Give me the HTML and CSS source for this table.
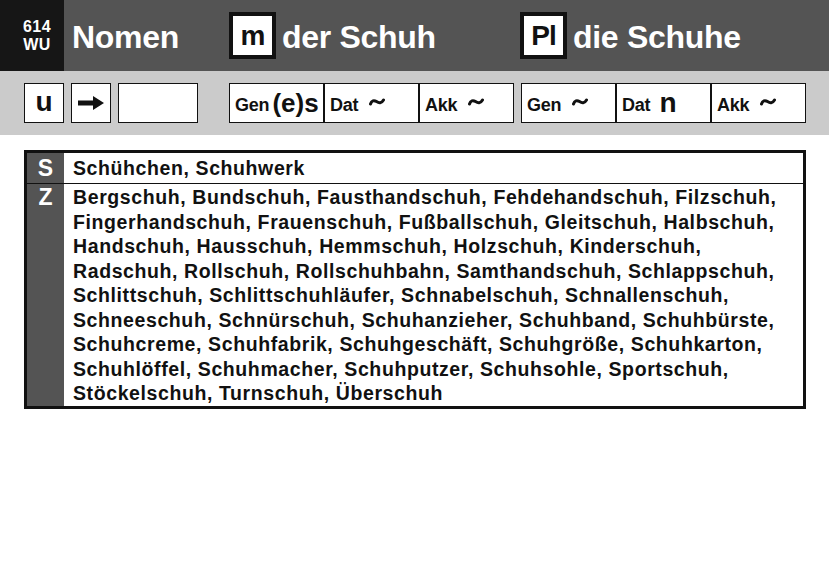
FILE: index.html
```html
<!DOCTYPE html>
<html lang="de">
<head>
<meta charset="utf-8">
<title>Nomen – der Schuh</title>
<link rel="stylesheet" href="styles.css">
</head>
<body>
<div class="page">
  <header class="header">
    <div class="num"><span>614</span><span>WU</span></div>
    <div class="grp grp-1"><span class="title">Nomen</span></div>
    <div class="grp grp-2"><span class="gbox">m</span><span class="title">der Schuh</span></div>
    <div class="grp grp-3"><span class="gbox">Pl</span><span class="title">die Schuhe</span></div>
  </header>
  <section class="band">
    <div class="grp grp-1 band-1">
      <div class="sq"><span class="u">u</span></div>
      <div class="sq"><svg width="26" height="14" viewBox="0 0 26 14"><path d="M0 4.5h15V0l11 7-11 7V9.5H0z" fill="#111"/></svg></div>
      <div class="sq wide"></div>
    </div>
    <div class="grp grp-2 cases">
      <div class="case"><span class="lbl">Gen</span><span class="big">(e)s</span></div>
      <div class="case"><span class="lbl">Dat</span><svg class="tilde" width="16" height="8" viewBox="0 0 16 8"><path d="M1.5 6C2.5 2.5 5 2 7.5 3.6S12.5 5.5 14.5 2" fill="none" stroke="#111" stroke-width="3" stroke-linecap="round"/></svg></div>
      <div class="case"><span class="lbl">Akk</span><svg class="tilde" width="16" height="8" viewBox="0 0 16 8"><path d="M1.5 6C2.5 2.5 5 2 7.5 3.6S12.5 5.5 14.5 2" fill="none" stroke="#111" stroke-width="3" stroke-linecap="round"/></svg></div>
    </div>
    <div class="grp grp-3 cases">
      <div class="case"><span class="lbl">Gen</span><svg class="tilde" width="16" height="8" viewBox="0 0 16 8"><path d="M1.5 6C2.5 2.5 5 2 7.5 3.6S12.5 5.5 14.5 2" fill="none" stroke="#111" stroke-width="3" stroke-linecap="round"/></svg></div>
      <div class="case"><span class="lbl">Dat</span><span class="big bign">n</span></div>
      <div class="case"><span class="lbl">Akk</span><svg class="tilde" width="16" height="8" viewBox="0 0 16 8"><path d="M1.5 6C2.5 2.5 5 2 7.5 3.6S12.5 5.5 14.5 2" fill="none" stroke="#111" stroke-width="3" stroke-linecap="round"/></svg></div>
    </div>
  </section>
  <section class="words">
    <div class="row row-s">
      <div class="key">S</div>
      <div class="val">Schühchen, Schuhwerk</div>
    </div>
    <div class="row row-z">
      <div class="key">Z</div>
      <div class="val">Bergschuh, Bundschuh, Fausthandschuh, Fehdehandschuh, Filzschuh,<br>Fingerhandschuh, Frauenschuh, Fußballschuh, Gleitschuh, Halbschuh,<br>Handschuh, Hausschuh, Hemmschuh, Holzschuh, Kinderschuh,<br>Radschuh, Rollschuh, Rollschuhbahn, Samthandschuh, Schlappschuh,<br>Schlittschuh, Schlittschuhläufer, Schnabelschuh, Schnallenschuh,<br>Schneeschuh, Schnürschuh, Schuhanzieher, Schuhband, Schuhbürste,<br>Schuhcreme, Schuhfabrik, Schuhgeschäft, Schuhgröße, Schuhkarton,<br>Schuhlöffel, Schuhmacher, Schuhputzer, Schuhsohle, Sportschuh,<br>Stöckelschuh, Turnschuh, Überschuh</div>
    </div>
  </section>
</div>
</body>
</html>
```

FILE: styles.css
```css
html, body {
  margin: 0;
  padding: 0;
  background: #fff;
}
body {
  font-family: "Liberation Sans", Arial, sans-serif;
  color: #111;
}
.page {
  width: 829px;
}
.header {
  display: flex;
  align-items: center;
  height: 71px;
  background: #545454;
}
.num {
  width: 64px;
  height: 71px;
  background: #161616;
  color: #fff;
  font-weight: 700;
  font-size: 16px;
  line-height: 18.5px;
  display: flex;
  flex-direction: column;
  align-items: center;
  justify-content: center;
  text-align: center;
  letter-spacing: 0.5px;
  box-sizing: border-box;
  padding: 1px 0 0 10px;
}
.grp {
  display: flex;
  align-items: center;
  box-sizing: border-box;
}
.header .grp-1 {
  width: 165px;
  padding-left: 8px;
}
.header .grp-2 {
  width: 291px;
}
.header .grp-3 {
  width: 309px;
}
.title {
  color: #fff;
  font-weight: 700;
  font-size: 32px;
  letter-spacing: -0.3px;
  line-height: 1;
  padding-top: 2px;
}
.gbox {
  width: 47px;
  height: 47px;
  box-sizing: border-box;
  border: 4px solid #111;
  background: #fff;
  color: #111;
  font-weight: 700;
  font-size: 28px;
  letter-spacing: -1px;
  display: flex;
  align-items: center;
  justify-content: center;
  margin-right: 6px;
}
.band {
  display: flex;
  height: 64px;
  background: #cbcbcb;
  padding: 12px 0 0 24px;
  box-sizing: border-box;
  align-items: flex-start;
}
.band-1 {
  width: 205px;
  gap: 7px;
  align-items: flex-start;
}
.sq {
  width: 40px;
  height: 40px;
  box-sizing: border-box;
  border: 1px solid #111;
  background: #fff;
  display: flex;
  align-items: center;
  justify-content: center;
}
.sq.wide {
  width: 80px;
}
.u {
  font-weight: 700;
  font-size: 28px;
  line-height: 1;
  margin-top: -2px;
}
.cases {
  height: 40px;
  border: 1px solid #111;
  background: #fff;
  align-items: stretch;
}
.band .grp-2 {
  width: 285px;
  margin-right: 7px;
}
.band .grp-3 {
  width: 285px;
}
.case {
  flex: 1;
  display: flex;
  align-items: center;
  padding-left: 5px;
  border-left: 2px solid #111;
  font-weight: 700;
  white-space: nowrap;
  overflow: hidden;
}
.case:first-child {
  border-left: 0;
}
.lbl {
  font-size: 18px;
  margin-top: 4px;
  letter-spacing: -0.2px;
}
.big {
  font-size: 26px;
  margin-left: 3px;
  letter-spacing: 0;
}
.bign {
  font-size: 28px;
  margin-left: 9px;
}
.tilde {
  margin-left: 11px;
  margin-top: -2px;
}
.words {
  margin: 15px 0 0 24px;
  width: 782px;
  border: 3px solid #111;
  box-sizing: border-box;
}
.row {
  display: flex;
}
.row-s {
  border-bottom: 1px solid #111;
}
.key {
  width: 37px;
  flex: none;
  background: #545454;
  color: #fff;
  font-weight: 700;
  font-size: 23px;
  text-align: center;
  line-height: 30px;
}
.val {
  padding-left: 9px;
  font-size: 19.5px;
  font-weight: 700;
  letter-spacing: 0.6px;
  white-space: nowrap;
}
.row-s .val {
  line-height: 30px;
}
.row-z .val {
  line-height: 24.5px;
  padding-top: 1px;
  padding-bottom: 0;
}
.row-z .key {
  line-height: 27px;
}
```
